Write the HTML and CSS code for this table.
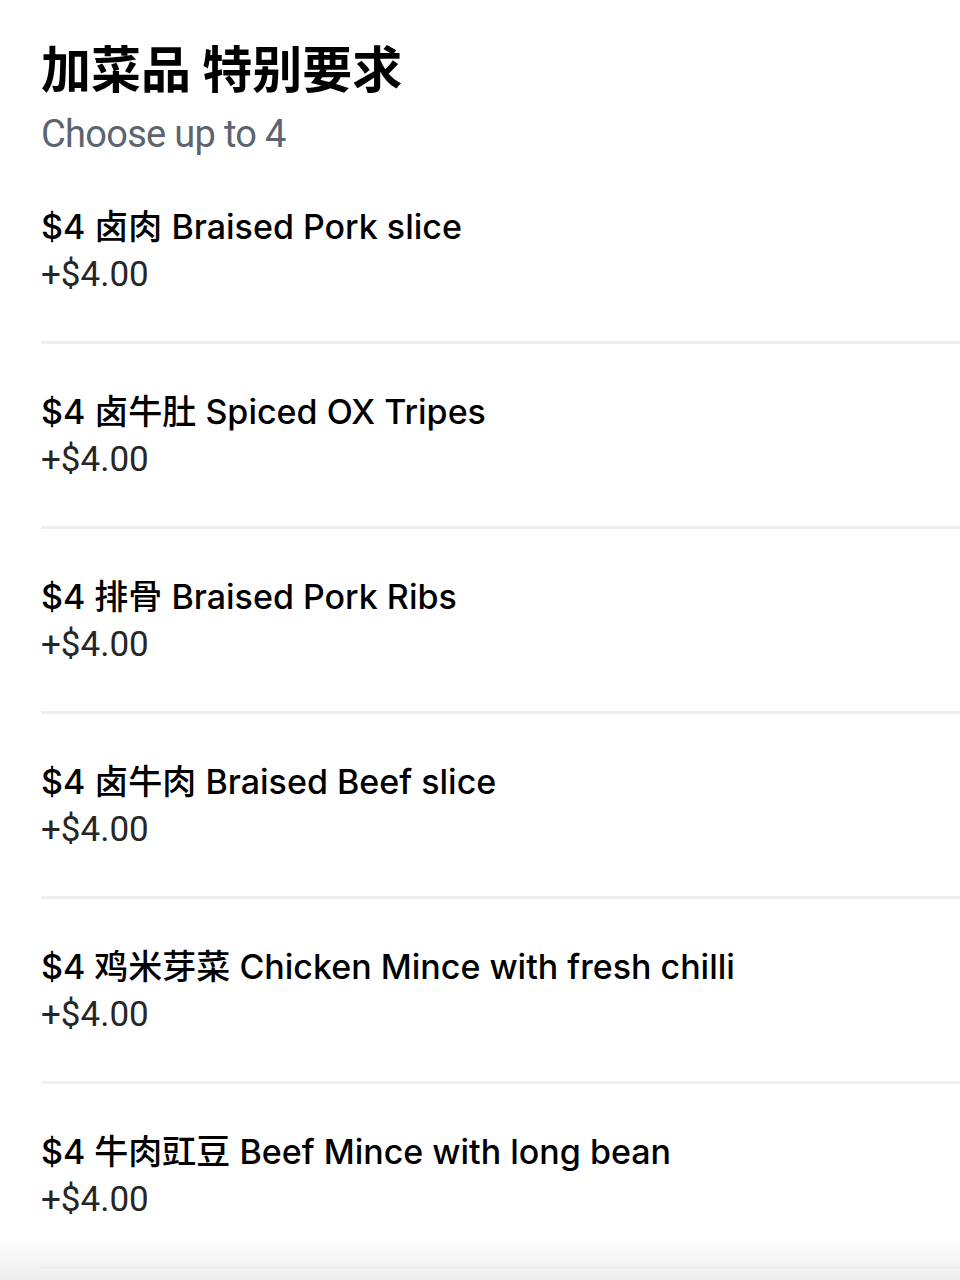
FILE: index.html
```html
<!DOCTYPE html>
<html lang="zh">
<head>
<meta charset="utf-8">
<title>加菜品 特别要求</title>
<link rel="stylesheet" href="styles.css">
</head>
<body>
<main class="group">
  <header class="group-head">
    <h1 class="group-title">加菜品 特别要求</h1>
    <p class="group-sub">Choose up to 4</p>
  </header>
  <ul class="options">
    <li class="option">
      <div class="option-name">$4 卤肉 Braised Pork slice</div>
      <div class="option-price">+$4.00</div>
    </li>
    <li class="option">
      <div class="option-name">$4 卤牛肚 Spiced OX Tripes</div>
      <div class="option-price">+$4.00</div>
    </li>
    <li class="option">
      <div class="option-name">$4 排骨 Braised Pork Ribs</div>
      <div class="option-price">+$4.00</div>
    </li>
    <li class="option">
      <div class="option-name">$4 卤牛肉 Braised Beef slice</div>
      <div class="option-price">+$4.00</div>
    </li>
    <li class="option">
      <div class="option-name">$4 鸡米芽菜 Chicken Mince with fresh chilli</div>
      <div class="option-price">+$4.00</div>
    </li>
    <li class="option">
      <div class="option-name">$4 牛肉豇豆 Beef Mince with long bean</div>
      <div class="option-price">+$4.00</div>
    </li>
  </ul>
</main>
<div class="bottom-fade"></div>
</body>
</html>
```

FILE: styles.css
```css
html, body {
  margin: 0;
  padding: 0;
  background: #ffffff;
}
body {
  font-family: Roboto, "Noto Sans CJK SC", sans-serif;
  color: #111111;
  overflow: hidden;
  height: 1280px;
}
.group {
  padding: 35px 0 0 41px;
}
.group-head {
  margin: 0;
}
.group-title {
  margin: 0;
  font-family: "Noto Sans CJK SC", Roboto, sans-serif;
  font-size: 50px;
  font-weight: 700;
  line-height: 62px;
  color: #000;
}
.group-sub {
  margin: 15px 0 0 0;
  font-size: 38px;
  line-height: 44px;
  letter-spacing: -0.7px;
  color: #5b6470;
}
.options {
  list-style: none;
  margin: 0;
  padding: 0;
}
.option {
  padding: 44px 0 42px 0;
  border-bottom: 3px solid #efefef;
}
.option:first-child {
  padding-top: 47px;
}
.option-name {
  font-family: Inter, "Noto Sans CJK SC", sans-serif;
  font-size: 34px;
  font-weight: 500;
  line-height: 48px;
  color: #000;
}
.option-price {
  font-size: 35px;
  font-weight: 400;
  line-height: 48px;
  color: #262626;
}
.bottom-fade {
  position: fixed;
  left: 0;
  right: 0;
  bottom: 0;
  height: 44px;
  background: linear-gradient(to bottom, rgba(240,240,240,0), rgba(236,236,236,0.9));
  pointer-events: none;
}
```
